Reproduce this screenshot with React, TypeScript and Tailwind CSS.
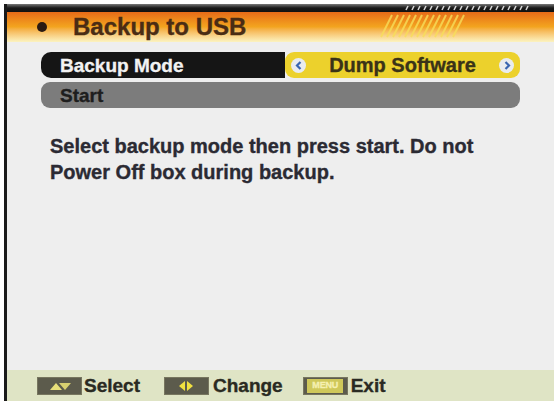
import React from 'react';

const font = { fontFamily: '"Liberation Sans", Arial, sans-serif' };

const Chevron = ({ dir }: { dir: 'left' | 'right' }) => (
  <span className="flex h-[15px] w-[15px] items-center justify-center rounded-full bg-[#e9ecef]">
    <svg width="8" height="9" viewBox="0 0 8 9">
      <path
        d={dir === 'left' ? 'M5.5 1 L2 4.5 L5.5 8' : 'M2.5 1 L6 4.5 L2.5 8'}
        fill="none"
        stroke="#3a66b0"
        strokeWidth="2.2"
      />
    </svg>
  </span>
);

const KeyBox = ({ kind }: { kind: 'updown' | 'leftright' | 'menu' }) => (
  <span className="flex h-[18px] w-[45px] items-center justify-center border border-[#77765f] bg-[#5c5b4c]">
    {kind === 'updown' && (
      <svg width="26" height="10" viewBox="0 0 26 10">
        <path d="M3 9 L9 2 L15 9 Z" fill="#e8e07a" />
        <path d="M12 2 L24 2 L18 9 Z" fill="#d8d070" />
      </svg>
    )}
    {kind === 'leftright' && (
      <svg width="20" height="12" viewBox="0 0 20 12">
        <path d="M9 1 L3 6 L9 11 Z" fill="#f0e040" />
        <path d="M11 1 L17 6 L11 11 Z" fill="#f0e040" />
      </svg>
    )}
    {kind === 'menu' && (
      <span className="flex h-[14px] w-[36px] items-center justify-center bg-[#cfc85a] text-[9px] font-bold leading-none tracking-tight text-[#f5f0b0]">
        MENU
      </span>
    )}
  </span>
);

export default function App() {
  return (
    <div
      className="h-[401px] w-[554px] overflow-hidden bg-white pl-[4px] pt-[4px] [-webkit-text-stroke:0.35px_currentColor]"
      style={font}
    >
      <div className="flex h-full flex-col border-l-[3px] border-[#1a1a1a] bg-[#eeeeee]">
        {/* top bar */}
        <div className="relative h-[8px] bg-gradient-to-b from-[#7a7a7a] via-[#1a1a1a] to-[#101010]">
          <svg className="absolute left-[398px] top-[1px]" width="125" height="6" viewBox="0 0 125 6">
            {Array.from({ length: 21 }).map((_, i) => (
              <path key={i} d={`M${i * 6 + 3} 1 L${i * 6 + 1} 5`} stroke="#d8d8d8" strokeWidth="1.6" />
            ))}
          </svg>
        </div>
        {/* title */}
        <div className="relative flex h-[30px] items-center bg-gradient-to-b from-[#e56a18] via-[#f3a51f] to-[#fbf3c0]">
          <svg className="absolute left-[373px] top-[2px]" width="90" height="24" viewBox="0 0 90 24">
            {Array.from({ length: 13 }).map((_, i) => (
              <path key={i} d={`M${i * 6 + 12} 1 L${i * 6 + 1} 23`} stroke="#f7de5a" strokeWidth="2" opacity="0.8" />
            ))}
          </svg>
          <span className="ml-[30px] h-[10px] w-[10px] rounded-full bg-[#2a1a12]" />
          <span className="relative ml-[26px] text-[24px] font-bold leading-none text-[#4a2c14]">Backup to USB</span>
        </div>

        {/* menu rows */}
        <div className="ml-[34px] mt-[10px] flex w-[479px] flex-col gap-[4px]">
          <div className="flex h-[26px]">
            <div className="flex w-[244px] items-center rounded-l-[10px] bg-[#151515] pl-[19px]">
              <span className="text-[19px] font-bold leading-none text-[#f2f2f2]">Backup Mode</span>
            </div>
            <div className="flex flex-1 items-center justify-between rounded-[9px] bg-[#ecd12c] px-[6px]">
              <Chevron dir="left" />
              <span className="text-[20px] font-bold leading-none text-[#3a3318]">Dump Software</span>
              <Chevron dir="right" />
            </div>
          </div>
          <div className="flex h-[26px] items-center rounded-[9px] bg-[#7c7c7c] pl-[19px]">
            <span className="text-[19px] font-bold leading-none text-[#1e1e1e]">Start</span>
          </div>
        </div>

        {/* help text */}
        <div className="ml-[43px] mt-[25px] text-[20px] font-bold leading-[26px] text-[#2b2a33]">
          <div>Select backup mode then press start. Do not</div>
          <div>Power Off box during backup.</div>
        </div>

        <div className="flex-1" />

        {/* footer */}
        <div className="flex h-[31px] items-center bg-[#dfe4c5] pl-[30px] text-[19px] font-bold leading-none text-[#2a2a22]">
          <KeyBox kind="updown" />
          <span className="ml-[2px]">Select</span>
          <span className="ml-[24px]" />
          <KeyBox kind="leftright" />
          <span className="ml-[4px]">Change</span>
          <span className="ml-[20px]" />
          <KeyBox kind="menu" />
          <span className="ml-[3px]">Exit</span>
        </div>
      </div>
    </div>
  );
}
